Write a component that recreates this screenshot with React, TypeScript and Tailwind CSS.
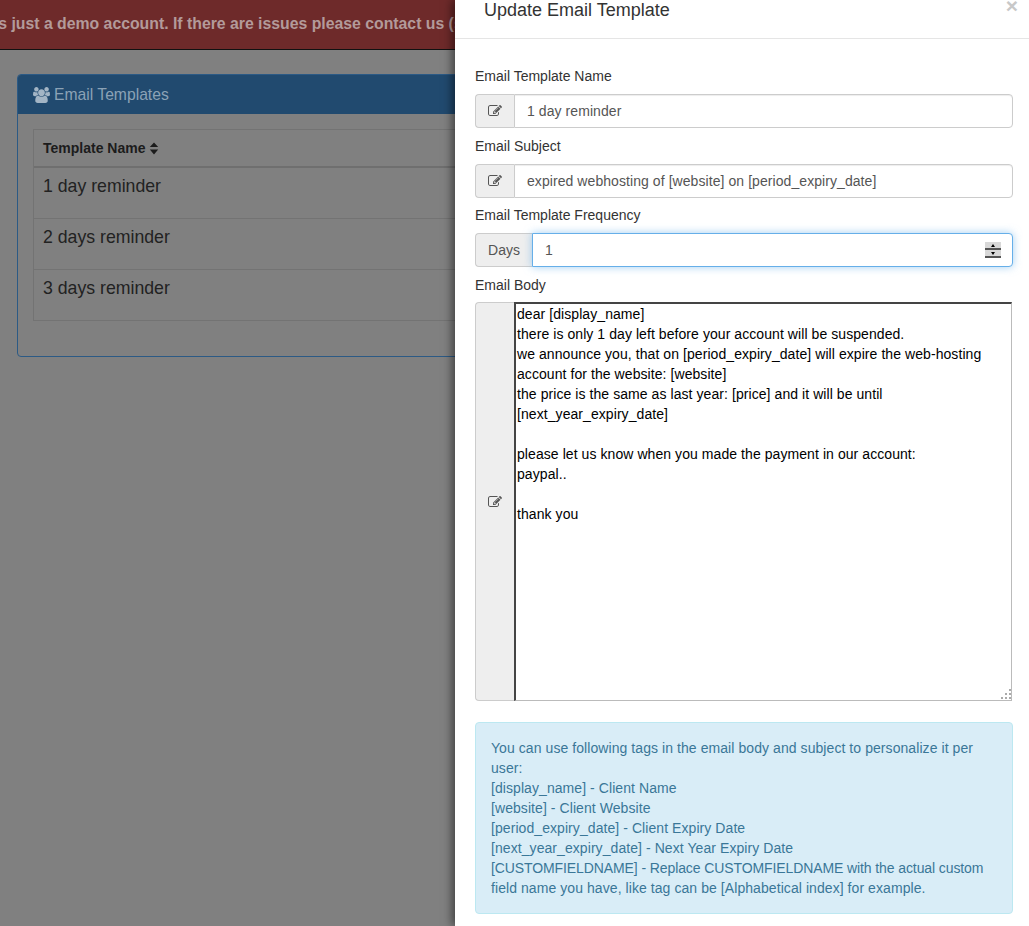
const templates = ['1 day reminder', '2 days reminder', '3 days reminder'];

const emailBody = `dear [display_name]
there is only 1 day left before your account will be suspended.
we announce you, that on [period_expiry_date] will expire the web-hosting account for the website: [website]
the price is the same as last year: [price] and it will be until [next_year_expiry_date]

please let us know when you made the payment in our account:
paypal..

thank you`;

function EditIcon() {
  return (
    <svg viewBox="0 0 1792 1792" fill="currentColor" className="h-[14px] w-[14px]">
      <path d="M888 1184l116-116-152-152-116 116v56h96v96h56zm440-720q-16-16-33 1l-350 350q-17 17-1 33t33-1l350-350q17-17 1-33zm80 594v190q0 119-84.5 203.5t-203.5 84.5h-832q-119 0-203.5-84.5t-84.5-203.5v-832q0-119 84.5-203.5t203.5-84.5h832q63 0 117 25 15 7 18 23 3 17-9 29l-49 49q-14 14-32 8-23-6-45-6h-832q-66 0-113 47t-47 113v832q0 66 47 113t113 47h832q66 0 113-47t47-113v-126q0-13 9-22l64-64q15-15 35-9t20 29zm-96-738l288 288-672 672h-288v-288zm444 132l-92 92-288-288 92-92q28-28 68-28t68 28l152 152q28 28 28 68t-28 68z" />
    </svg>
  );
}

function UsersIcon() {
  return (
    <svg viewBox="0 0 1920 1792" fill="currentColor" className="h-[16px] w-[17px]">
      <path d="M593 896q-162 5-265 128h-134q-82 0-138-40.500t-56-118.500q0-353 124-353 6 0 43.500 21t97.500 42.500 119 21.500q67 0 133-23-5 37-5 66 0 139 81 256zm1071 637q0 120-73 189.500t-194 69.500h-874q-121 0-194-69.500t-73-189.500q0-53 3.500-103.500t14-109 26.500-108.500 43-97.500 62-81 85.500-53.500 111.500-20q10 0 43 21.500t73 48 107 48 135 21.500 135-21.500 107-48 73-48 43-21.500q61 0 111.500 20t85.500 53.500 62 81 43 97.500 26.500 108.500 14 109 3.500 103.500zm-1024-1277q0 106-75 181t-181 75-181-75-75-181 75-181 181-75 181 75 75 181zm704 384q0 159-112.500 271.500t-271.500 112.500-271.500-112.500-112.500-271.500 112.500-271.500 271.500-112.500 271.500 112.500 112.500 271.500zm576 225q0 78-56 118.500t-138 40.500h-134q-103-123-265-128 81-117 81-256 0-29-5-66 66 23 133 23 59 0 119-21.500t97.500-42.500 43.500-21q124 0 124 353zm-128-609q0 106-75 181t-181 75-181-75-75-181 75-181 181-75 181 75 75 181z" />
    </svg>
  );
}

function SortIcon() {
  return (
    <svg viewBox="0 0 10 14" fill="currentColor" className="h-[13px] w-[10px]">
      <path d="M5 0.5 9.5 5.500H0.500zM5 13.500 0.500 8h9z" />
    </svg>
  );
}

function EditAddon() {
  return (
    <div className="flex w-[39px] shrink-0 items-center justify-center rounded-l border border-r-0 border-[#ccc] bg-[#eee] text-[#555]">
      <EditIcon />
    </div>
  );
}

function IconInput({ value }: { value: string }) {
  return (
    <div className="flex h-[34px]">
      <EditAddon />
      <input
        readOnly
        value={value}
        className="min-w-0 flex-1 rounded-r border border-[#ccc] bg-white px-3 text-sm tracking-[0.07px] text-[#555] shadow-[inset_0_1px_1px_rgba(0,0,0,0.075)] outline-none"
      />
    </div>
  );
}

function Spinner() {
  return (
    <div className="absolute top-[9px] right-[12px] flex h-[16px] w-[16px] flex-col">
      <div className="flex h-[8px] items-center justify-center border-b-2 border-[#555] bg-[#d8d8d8]">
        <div className="h-0 w-0 border-x-[2px] border-b-[3px] border-x-transparent border-b-black" />
      </div>
      <div className="flex h-[8px] items-center justify-center border-b-2 border-[#555] bg-[#d8d8d8]">
        <div className="h-0 w-0 border-x-[2px] border-t-[3px] border-x-transparent border-t-black" />
      </div>
    </div>
  );
}

export default function App() {
  return (
    <div className="relative h-[926px] w-[1029px] overflow-hidden bg-[#808080] font-['Liberation_Sans',Arial,sans-serif] text-sm text-[#333]">
      <div className="flex h-[50px] items-center overflow-hidden border-b border-[#111] bg-[#6e2a2a] text-[15.8px] font-bold whitespace-nowrap text-[#b39a9a]">
        <span className="ml-[-43px]">This is just a demo account. If there are issues please contact us (support)</span>
      </div>

      <div className="px-[17px] pt-[24px]">
        <div className="h-[283px] rounded border border-[#2c5a85]">
          <div className="flex h-[39px] items-center gap-[4px] rounded-t-[3px] bg-[#214a6f] px-[15px] pt-[1px] text-[15.7px] text-[#8ba2b6]">
            <span className="text-[#a3b5c5]">
              <UsersIcon />
            </span>
            <span>Email Templates</span>
          </div>
          <div className="px-[15px] pt-[15px]">
            <div className="border border-[#737373]">
              <div className="flex h-[38px] items-center gap-[4px] border-b-2 border-[#6f6f6f] px-[9px] font-bold text-[#1c1c1c]">
                Template Name
                <SortIcon />
              </div>
              <div className="h-[51px] border-b border-[#737373] px-[9px] pt-[7px] text-[17.7px] leading-[22px] text-[#222]">{templates[0]}</div>
              <div className="h-[51px] border-b border-[#737373] px-[9px] pt-[7px] text-[17.7px] leading-[22px] text-[#222]">{templates[1]}</div>
              <div className="h-[50px] px-[9px] pt-[7px] text-[17.7px] leading-[22px] text-[#222]">{templates[2]}</div>
            </div>
          </div>
        </div>
      </div>

      <div className="absolute top-0 right-0 bottom-0 w-[574px] bg-white shadow-[-3px_0_9px_rgba(0,0,0,0.5)]">
        <div className="relative h-[39px] border-b border-[#e5e5e5] pl-[29px] text-lg leading-[20px]">
          Update Email Template
          <span className="absolute top-0 right-[11px] text-[21px] leading-[12px] font-bold text-[#c8c8c8]">×</span>
        </div>

        <div className="pt-[27px] pr-[16px] pl-[20px]">
          <div className="pb-[8px] leading-[20px]">Email Template Name</div>
          <IconInput value="1 day reminder" />

          <div className="pt-[8px] pb-[8px] leading-[20px]">Email Subject</div>
          <IconInput value="expired webhosting of [website] on [period_expiry_date]" />

          <div className="pt-[7px] pb-[8px] leading-[20px]">Email Template Frequency</div>
          <div className="flex h-[34px]">
            <div className="flex w-[57px] shrink-0 items-center justify-center rounded-l border border-r-0 border-[#ccc] bg-[#eee] text-[#555]">
              Days
            </div>
            <div className="relative min-w-0 flex-1">
              <input
                readOnly
                value="1"
                className="h-full w-full rounded-r border border-[#66afe9] bg-white px-3 text-sm text-[#555] shadow-[0_0_8px_rgba(102,175,233,0.6)] outline-none"
              />
              <Spinner />
            </div>
          </div>

          <div className="pt-[8px] pb-[7px] leading-[20px]">Email Body</div>
          <div className="flex h-[399px]">
            <EditAddon />
            <div className="relative min-w-0 flex-1">
              <textarea
                readOnly
                value={emailBody}
                className="block h-full w-[498px] resize-none rounded-none border-t-2 border-r border-b border-l-2 border-t-[#444] border-r-[#bbb] border-b-[#bbb] border-l-[#444] bg-white px-[1px] py-0 text-sm leading-[20px] tracking-[0.07px] text-black outline-none"
              />
              <svg className="absolute right-[2px] bottom-[2px] h-[10px] w-[10px]" viewBox="0 0 10 10" fill="#aaa">
                <rect x="8" y="0" width="2" height="2" />
                <rect x="4" y="4" width="2" height="2" />
                <rect x="8" y="4" width="2" height="2" />
                <rect x="0" y="8" width="2" height="2" />
                <rect x="4" y="8" width="2" height="2" />
                <rect x="8" y="8" width="2" height="2" />
              </svg>
            </div>
          </div>

          <div className="mt-[21px] rounded border border-[#bce8f1] bg-[#d9edf7] p-[15px] leading-[20px] tracking-[0.07px] text-[#3a7798]">
            <div>You can use following tags in the email body and subject to personalize it per user:</div>
            <div>[display_name] - Client Name</div>
            <div>[website] - Client Website</div>
            <div>[period_expiry_date] - Client Expiry Date</div>
            <div>[next_year_expiry_date] - Next Year Expiry Date</div>
            <div className="tracking-[-0.1px]">[CUSTOMFIELDNAME] - Replace CUSTOMFIELDNAME with the actual custom</div>
            <div>field name you have, like tag can be [Alphabetical index] for example.</div>
          </div>
        </div>
      </div>
    </div>
  );
}
